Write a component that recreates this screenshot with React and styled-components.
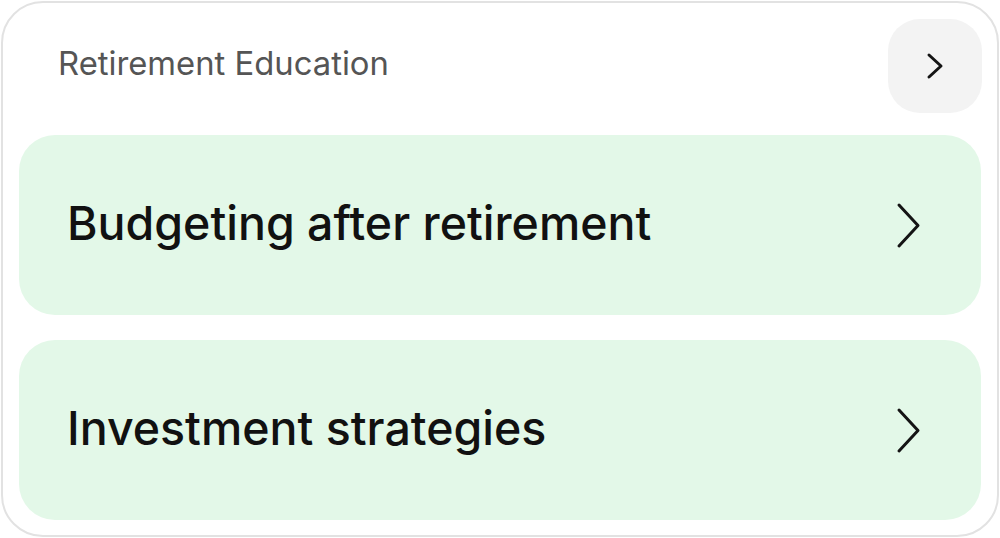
import React from "react";
import styled, { createGlobalStyle } from "styled-components";

const Global = createGlobalStyle`
  html, body {
    margin: 0;
    padding: 0;
    background: #ffffff;
  }
  body {
    font-family: Inter, "Open Sans", sans-serif;
  }
`;

const Card = styled.div`
  box-sizing: border-box;
  width: 998px;
  height: 536px;
  margin: 1px;
  border: 2px solid #e2e2e2;
  border-radius: 42px;
  padding: 16px;
  display: flex;
  flex-direction: column;
`;

const Header = styled.div`
  display: flex;
  align-items: center;
  justify-content: space-between;
  height: 94px;
  margin-bottom: 22px;
`;

const Title = styled.h2`
  margin: 0 0 6px 39px;
  font-size: 32.8px;
  font-weight: 400;
  color: #555555;
`;

const IconButton = styled.button`
  width: 94px;
  height: 94px;
  margin-right: -1px;
  border: none;
  border-radius: 32px;
  background: #f3f3f3;
  display: flex;
  align-items: center;
  justify-content: center;
  cursor: pointer;
  padding: 0;
`;

const List = styled.div`
  display: flex;
  flex-direction: column;
  gap: 25px;
`;

const Item = styled.div`
  height: 180px;
  border-radius: 36px;
  background: #e3f8e8;
  display: flex;
  align-items: center;
  justify-content: space-between;
  padding: 0 60px 0 48px;
  cursor: pointer;
`;

const ItemLabel = styled.span`
  font-size: 46.5px;
  font-weight: 460;
  color: #111111;
  margin-bottom: 4px;
`;

const Chevron = ({ w, h, stroke }) => (
  <svg width={w} height={h} viewBox={`0 0 ${w} ${h}`} fill="none">
    <polyline
      points={`${stroke},${stroke} ${w - stroke},${h / 2} ${stroke},${h - stroke}`}
      stroke="#141414"
      strokeWidth={stroke}
      strokeLinecap="round"
      strokeLinejoin="round"
    />
  </svg>
);

const items = ["Budgeting after retirement", "Investment strategies"];

export default function App() {
  return (
    <>
      <Global />
      <Card>
        <Header>
          <Title>Retirement Education</Title>
          <IconButton aria-label="More">
            <Chevron w={18} h={28} stroke={3} />
          </IconButton>
        </Header>
        <List>
          {items.map((label) => (
            <Item key={label}>
              <ItemLabel>{label}</ItemLabel>
              <Chevron w={25} h={47} stroke={3} />
            </Item>
          ))}
        </List>
      </Card>
    </>
  );
}
